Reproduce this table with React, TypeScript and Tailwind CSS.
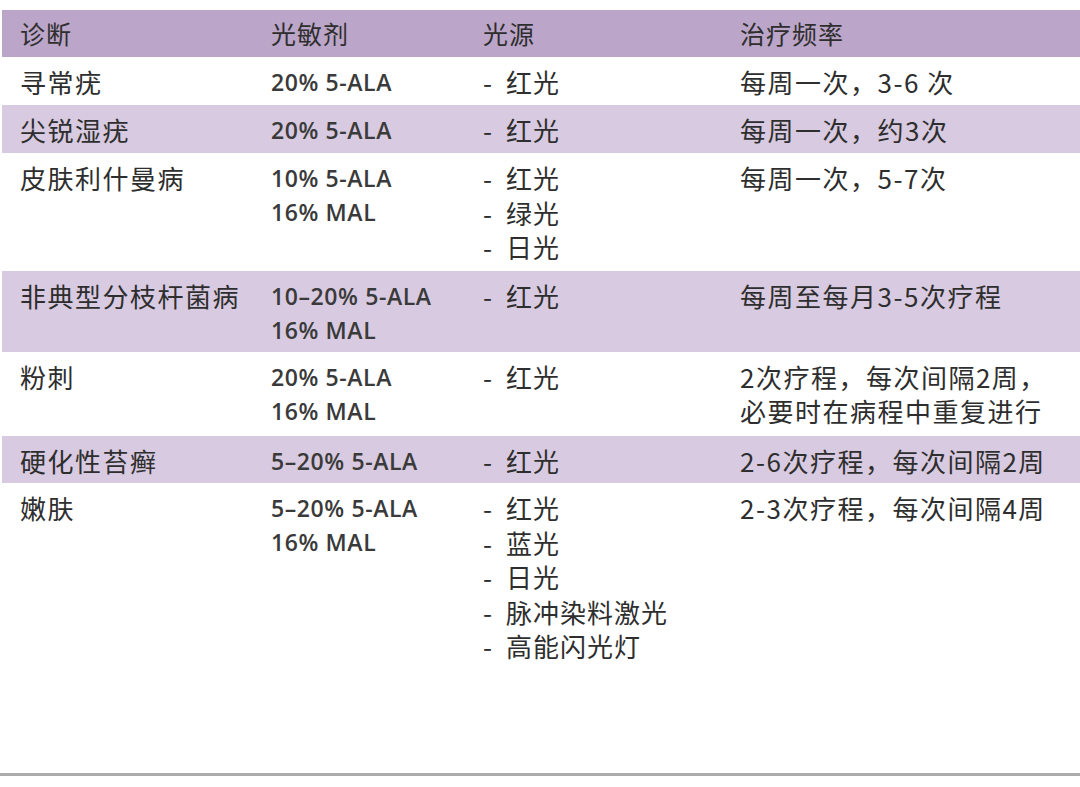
import React from 'react';

type Row = {
  diag: string;
  agents: string[];
  lights: string[];
  freq: string[];
  tint: boolean;
  h: string;
};

const rows: Row[] = [
  { diag: '寻常疣', agents: ['20% 5-ALA'], lights: ['红光'], freq: ['每周一次，3-6 次'], tint: false, h: 'h-[48px]' },
  { diag: '尖锐湿疣', agents: ['20% 5-ALA'], lights: ['红光'], freq: ['每周一次，约3次'], tint: true, h: 'h-[48px]' },
  { diag: '皮肤利什曼病', agents: ['10% 5-ALA', '16% MAL'], lights: ['红光', '绿光', '日光'], freq: ['每周一次，5-7次'], tint: false, h: 'h-[118px]' },
  { diag: '非典型分枝杆菌病', agents: ['10–20% 5-ALA', '16% MAL'], lights: ['红光'], freq: ['每周至每月3-5次疗程'], tint: true, h: 'h-[81px]' },
  { diag: '粉刺', agents: ['20% 5-ALA', '16% MAL'], lights: ['红光'], freq: ['2次疗程，每次间隔2周，', '必要时在病程中重复进行'], tint: false, h: 'h-[84px]' },
  { diag: '硬化性苔癣', agents: ['5–20% 5-ALA'], lights: ['红光'], freq: ['2-6次疗程，每次间隔2周'], tint: true, h: 'h-[47px]' },
  { diag: '嫩肤', agents: ['5–20% 5-ALA', '16% MAL'], lights: ['红光', '蓝光', '日光', '脉冲染料激光', '高能闪光灯'], freq: ['2-3次疗程，每次间隔4周'], tint: false, h: 'h-[290px]' },
];

const cjk = "font-['Noto_Sans_CJK_SC','Noto_Sans',sans-serif]";
const latin = "font-['Open_Sans','Noto_Sans_CJK_SC',sans-serif]";

export default function App() {
  return (
    <div className={`w-[1080px] h-[787px] bg-white overflow-hidden pt-[10px] text-[#2e2e2e] ${cjk}`}>
      <div className="ml-[2px] h-[47px] bg-[#bba5c8] grid grid-cols-[251px_212px_257px_1fr] pl-[18px] pt-[6px] text-[25px] leading-[34px] tracking-[1px]">
        <div>诊断</div>
        <div>光敏剂</div>
        <div>光源</div>
        <div>治疗频率</div>
      </div>
      {rows.map((r, i) => (
        <div
          key={i}
          className={`ml-[2px] ${r.h} ${r.tint ? 'bg-[#d8cae0]' : 'bg-white'} grid grid-cols-[251px_212px_257px_1fr] pl-[18px] pt-[8px]`}
        >
          <div className="text-[26px] leading-[34px] tracking-[1.5px]">{r.diag}</div>
          <div className={`${latin} text-[23px] leading-[34px] font-semibold tracking-[0.6px] text-[#3a3a3a]`}>
            {r.agents.map((a) => (
              <div key={a}>{a}</div>
            ))}
          </div>
          <div className="text-[26px] leading-[34.5px] tracking-[1px]">
            {r.lights.map((l) => (
              <div key={l} className="flex">
                <span className="w-[23px]">-</span>
                <span>{l}</span>
              </div>
            ))}
          </div>
          <div className="text-[26px] leading-[34px] tracking-[1.5px]">
            {r.freq.map((f) => (
              <div key={f}>{f}</div>
            ))}
          </div>
        </div>
      ))}
      <div className="h-[3px] bg-[#ababab]" />
    </div>
  );
}
